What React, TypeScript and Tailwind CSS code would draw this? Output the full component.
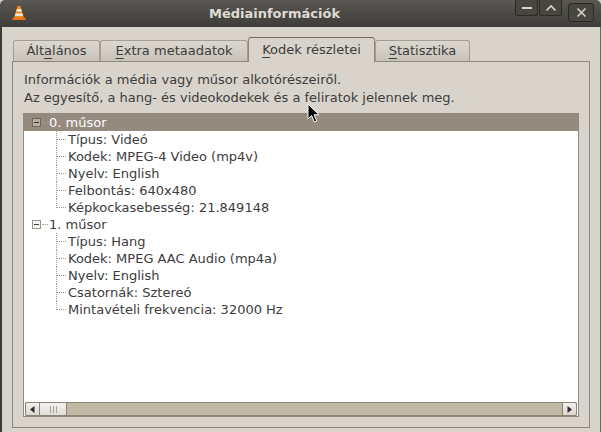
import React from "react";

const FONT = { fontFamily: '"DejaVu Sans", "Noto Sans", sans-serif' };

function Cone() {
  return (
    <svg width="14" height="16" viewBox="0 0 14 16">
      <path d="M5.6 1 L8.4 1 L12 13 L2 13 Z" fill="#f28c1c" />
      <path d="M4.9 4.3 L9.1 4.3 L9.8 6.6 L4.2 6.6 Z" fill="#f4f1ea" />
      <path d="M3.6 8.6 L10.4 8.6 L11.1 10.8 L2.9 10.8 Z" fill="#f4f1ea" />
      <path d="M0.5 12.6 L13.5 12.6 L13.5 15 L0.5 15 Z" fill="#e8761a" />
    </svg>
  );
}

function Cursor() {
  return (
    <svg width="14" height="21" viewBox="0 0 14 21">
      <path
        d="M1 1 L1 16 L4.6 12.6 L7.4 19 L9.8 18 L7.1 11.8 L12 11.8 Z"
        fill="#000"
        stroke="#fff"
        strokeWidth="1"
        strokeLinejoin="round"
      />
    </svg>
  );
}

function Expander({ selected }: { selected?: boolean }) {
  return (
    <div
      className={
        "w-[9px] h-[9px] border flex items-center justify-center " +
        (selected ? "border-[#6f675d] bg-[#b8afa4]" : "border-[#9a958d] bg-[#f4f3f1]")
      }
    >
      <div className={"w-[5px] h-px " + (selected ? "bg-[#3a3530]" : "bg-[#3c3c3c]")} />
    </div>
  );
}

function RootRow({ label, selected }: { label: string; selected?: boolean }) {
  return (
    <div
      className={
        "h-[17px] flex items-center " +
        (selected ? "bg-[#958a7e] text-white" : "text-[#3c3c3c]")
      }
    >
      <div className="w-[8px]" />
      <Expander selected={selected} />
      <div className="w-[6px] ml-px border-t border-dotted border-[#a09a92]" />
      <span className="ml-[1px] leading-[17px]">{label}</span>
    </div>
  );
}

function ChildRow({ label, last }: { label: string; last?: boolean }) {
  return (
    <div className="h-[17px] flex items-stretch text-[#3c3c3c]">
      <div className="w-[32px]" />
      <div className="w-[11px] relative">
        <div
          className={
            "absolute left-0 top-0 border-l border-dotted border-[#a09a92] " +
            (last ? "h-[9px]" : "h-[17px]")
          }
        />
        <div className="absolute left-0 top-[8px] w-[10px] border-t border-dotted border-[#a09a92]" />
      </div>
      <span className="ml-[1px] leading-[17px]">{label}</span>
    </div>
  );
}

function Tab({
  label,
  under,
  width,
  active,
}: {
  label: string;
  under: number;
  width: string;
  active?: boolean;
}) {
  const before = label.slice(0, under);
  const u = label.slice(under, under + 1);
  const after = label.slice(under + 1);
  return (
    <div
      className={
        width +
        " flex items-center justify-center text-[13px] text-[#3c3c3c] border border-b-0 rounded-t-[3px] " +
        (active
          ? "h-[25px] bg-[#d8d4cb] border-[#8d877d] border-t-[#6f6860] z-10 relative -mb-px"
          : "h-[21px] bg-gradient-to-b from-[#dcd8d0] to-[#c8c3b9] border-[#a29d95]")
      }
    >
      <span>
        {before}
        <span className="underline underline-offset-[3px] decoration-1">{u}</span>
        {after}
      </span>
    </div>
  );
}

export default function App() {
  return (
    <div
      className="w-[601px] h-[432px] flex flex-col bg-[#d8d4cb] relative overflow-hidden"
      style={FONT}
    >
      {/* Title bar */}
      <div className="h-[27px] flex items-start bg-gradient-to-b from-[#5a5853] to-[#3e3d39] rounded-t-[5px]">
        <div className="pl-[12px] pt-[5px] w-[34px]">
          <Cone />
        </div>
        <div className="flex-1 h-[27px] flex items-center justify-center text-[13px] font-bold text-[#dfdbd2]">
          Médiainformációk
        </div>
        <div className="flex items-start gap-[1px] pr-[5px] w-[86px]">
          <div className="w-[23px] h-[16px] border border-t-0 border-[#2a2926] rounded-b-[3px] bg-[#47463f] flex items-center justify-center">
            <div className="w-[10px] h-[2px] bg-[#d8d4cc]" />
          </div>
          <div className="w-[23px] h-[16px] border border-t-0 border-[#2a2926] rounded-b-[3px] bg-[#47463f] flex items-center justify-center">
            <svg width="12" height="8" viewBox="0 0 12 8">
              <path d="M1.5 6.5 L6 2 L10.5 6.5" stroke="#d8d4cc" strokeWidth="1.6" fill="none" />
            </svg>
          </div>
          <div className="ml-[5px] mt-[3px] w-[26px] h-[19px] border border-[#2a2926] rounded-[3px] bg-[#47463f] flex items-center justify-center">
            <svg width="11" height="11" viewBox="0 0 11 11">
              <path d="M1.5 1.5 L9.5 9.5 M9.5 1.5 L1.5 9.5" stroke="#d8d4cc" strokeWidth="1.6" />
            </svg>
          </div>
        </div>
      </div>

      {/* Body */}
      <div className="flex-1 flex flex-col border-l-[2px] border-l-[#3c3b37] border-r border-r-[#6a675f] pl-[10px] pr-[10px] pt-[10px] pb-[4px]">
        <div className="flex items-end h-[24px] pl-px">
          <Tab label="Általános" under={3} width="w-[87px]" />
          <Tab label="Extra metaadatok" under={0} width="w-[148px]" />
          <Tab label="Kodek részletei" under={0} width="w-[127px]" active />
          <Tab label="Statisztika" under={0} width="w-[95px]" />
        </div>
        <div className="flex-1 flex flex-col border border-[#8d877d] bg-[#d8d4cb] px-[10px] pt-[9px] pb-[10px]">
          <div className="text-[13px] leading-[18px] text-[#3c3c3c] pl-px">
            <div>Információk a média vagy műsor alkotórészeiről.</div>
            <div>Az egyesítő, a hang- és videokodekek és a feliratok jelennek meg.</div>
          </div>
          <div className="mt-[6px] flex-1 flex flex-col border border-[#8e8981] bg-white text-[13px]">
            <div className="flex-1">
              <RootRow label="0. műsor" selected />
              <ChildRow label="Típus: Videó" />
              <ChildRow label="Kodek: MPEG-4 Video (mp4v)" />
              <ChildRow label="Nyelv: English" />
              <ChildRow label="Felbontás: 640x480" />
              <ChildRow label="Képkockasebesség: 21.849148" last />
              <RootRow label="1. műsor" />
              <ChildRow label="Típus: Hang" />
              <ChildRow label="Kodek: MPEG AAC Audio (mp4a)" />
              <ChildRow label="Nyelv: English" />
              <ChildRow label="Csatornák: Sztereó" />
              <ChildRow label="Mintavételi frekvencia: 32000 Hz" last />
            </div>
            {/* horizontal scrollbar */}
            <div className="h-[14px] mx-px flex bg-[#c1b8a6] border-y border-[#8c8476] rounded-[2px]">
              <div className="w-[15px] bg-gradient-to-b from-[#f2f0ec] to-[#dcd8d0] border border-[#8c8476] -my-px rounded-l-[2px] flex items-center justify-center">
                <svg width="5" height="7" viewBox="0 0 5 7">
                  <path d="M4.5 0 L0 3.5 L4.5 7 Z" fill="#2e2e2e" />
                </svg>
              </div>
              <div className="w-[27px] bg-gradient-to-b from-[#f4f2ee] to-[#e2ded6] border-r border-[#8c8476] flex items-center justify-center gap-[2px]">
                <div className="w-px h-[7px] bg-[#a8a299]" />
                <div className="w-px h-[7px] bg-[#a8a299]" />
                <div className="w-px h-[7px] bg-[#a8a299]" />
              </div>
              <div className="flex-1" />
              <div className="w-[15px] bg-gradient-to-b from-[#f2f0ec] to-[#dcd8d0] border border-[#8c8476] -my-px rounded-r-[2px] flex items-center justify-center">
                <svg width="5" height="7" viewBox="0 0 5 7">
                  <path d="M0.5 0 L5 3.5 L0.5 7 Z" fill="#2e2e2e" />
                </svg>
              </div>
            </div>
          </div>
        </div>
      </div>

      <div className="absolute left-[307px] top-[103px]">
        <Cursor />
      </div>
    </div>
  );
}
